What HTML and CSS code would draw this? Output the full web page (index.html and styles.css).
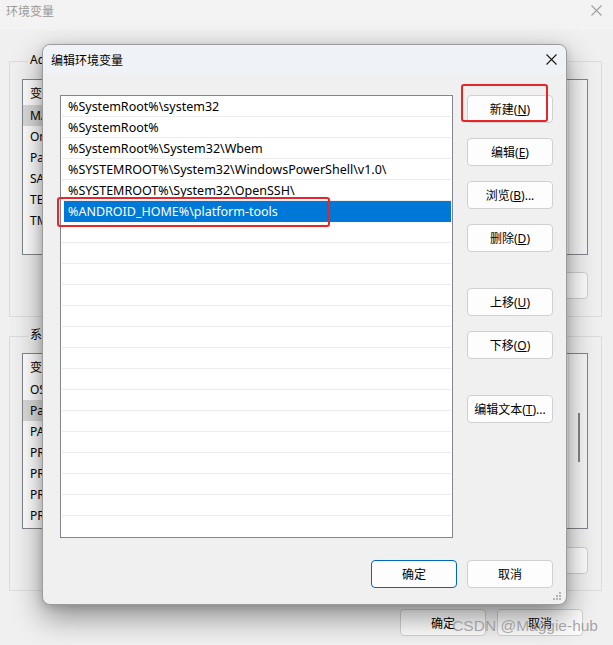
FILE: index.html
```html
<!DOCTYPE html>
<html lang="zh-CN">
<head>
  <meta charset="UTF-8" />
  <title>环境变量</title>
  <link rel="stylesheet" href="styles.css">
</head>
<body>
  <div class="window">
    <div class="win-title">
      <span>环境变量</span>
      <svg class="x-icon" width="11" height="11" viewBox="0 0 11 11"><path d="M0.5 0.5 L10.5 10.5 M10.5 0.5 L0.5 10.5" stroke="#a0a0a0" stroke-width="1.1" fill="none"/></svg>
    </div>

    <div class="group first">
      <div class="group-label">Administrator 的用户变量(U)</div>
      <div class="var-list">
        <div class="var-rows">
          <div class="var-head">变量<span>值</span></div>
          <div class="var-row"><span class="name hover">MAVEN_HOME</span></div>
          <div class="var-row"><span class="name">OneDrive</span></div>
          <div class="var-row"><span class="name">Path</span></div>
          <div class="var-row"><span class="name">SAVED_HOME</span></div>
          <div class="var-row"><span class="name">TEMP</span></div>
          <div class="var-row"><span class="name">TMP</span></div>
        </div>
        <div class="scrollbar"></div>
      </div>
      <div class="btn-row">
        <button class="btn">新建(<u>N</u>)...</button>
        <button class="btn">编辑(<u>E</u>)...</button>
        <button class="btn">删除(<u>D</u>)</button>
      </div>
    </div>

    <div class="group">
      <div class="group-label">系统变量(S)</div>
      <div class="var-list">
        <div class="var-rows">
          <div class="var-head">变量<span>值</span></div>
          <div class="var-row"><span class="name">OS</span></div>
          <div class="var-row"><span class="name hover">Path</span></div>
          <div class="var-row"><span class="name">PATHEXT</span></div>
          <div class="var-row"><span class="name">PROCESSOR_ARCHITECTURE</span></div>
          <div class="var-row"><span class="name">PROCESSOR_IDENTIFIER</span></div>
          <div class="var-row"><span class="name">PROCESSOR_LEVEL</span></div>
          <div class="var-row"><span class="name">PROCESSOR_REVISION</span></div>
        </div>
        <div class="scrollbar"><div class="thumb"></div></div>
      </div>
      <div class="btn-row">
        <button class="btn">新建(<u>W</u>)...</button>
        <button class="btn">编辑(<u>I</u>)...</button>
        <button class="btn">删除(<u>L</u>)</button>
      </div>
    </div>

    <div class="btn-row bottom">
      <button class="btn">确定</button>
      <button class="btn">取消</button>
    </div>

    <div class="dialog">
      <div class="dlg-title">
        <span>编辑环境变量</span>
        <svg class="x-icon" width="11" height="11" viewBox="0 0 11 11"><path d="M0.5 0.5 L10.5 10.5 M10.5 0.5 L0.5 10.5" stroke="#1a1a1a" stroke-width="1.1" fill="none"/></svg>
      </div>
      <div class="dlg-body">
        <div class="path-list">
          <div class="path-row">%SystemRoot%\system32</div>
          <div class="path-row">%SystemRoot%</div>
          <div class="path-row">%SystemRoot%\System32\Wbem</div>
          <div class="path-row">%SYSTEMROOT%\System32\WindowsPowerShell\v1.0\</div>
          <div class="path-row">%SYSTEMROOT%\System32\OpenSSH\</div>
          <div class="path-row selected">%ANDROID_HOME%\platform-tools</div>
          <div class="path-row"></div>
          <div class="path-row"></div>
          <div class="path-row"></div>
          <div class="path-row"></div>
          <div class="path-row"></div>
          <div class="path-row"></div>
          <div class="path-row"></div>
          <div class="path-row"></div>
          <div class="path-row"></div>
          <div class="path-row"></div>
          <div class="path-row"></div>
          <div class="path-row"></div>
          <div class="path-row"></div>
          <div class="path-row"></div>
          <div class="path-row last"></div>
        </div>
        <div class="side-btns">
          <button class="btn">新建(<u>N</u>)</button>
          <button class="btn">编辑(<u>E</u>)</button>
          <button class="btn">浏览(<u>B</u>)...</button>
          <button class="btn">删除(<u>D</u>)</button>
          <button class="btn sep">上移(<u>U</u>)</button>
          <button class="btn">下移(<u>O</u>)</button>
          <button class="btn sep">编辑文本(<u>T</u>)...</button>
        </div>
      </div>
      <div class="dlg-foot">
        <button class="btn default">确定</button>
        <button class="btn">取消</button>
      </div>

      <!-- annotations -->
      <div class="mark mark-row"></div>
      <div class="mark mark-new"></div>

      <svg class="grip" width="9" height="9" viewBox="0 0 9 9">
        <rect x="6" y="0" width="2" height="2" fill="#b4b4b4"/>
        <rect x="3" y="3" width="2" height="2" fill="#b4b4b4"/>
        <rect x="6" y="3" width="2" height="2" fill="#b4b4b4"/>
        <rect x="0" y="6" width="2" height="2" fill="#b4b4b4"/>
        <rect x="3" y="6" width="2" height="2" fill="#b4b4b4"/>
        <rect x="6" y="6" width="2" height="2" fill="#b4b4b4"/>
      </svg>
    </div>

    <div class="watermark">CSDN @Maggie-hub</div>
  </div>
</body>
</html>
```

FILE: styles.css
```css
body {
  margin: 0;
  font-family: "Noto Sans", "Noto Sans CJK SC", sans-serif;
  font-size: 12px;
  color: #000;
}
.window {
  position: relative;
  width: 613px;
  height: 645px;
  background-color: #f0f0f0;
  overflow: hidden;
}
.win-title {
  height: 30px;
  display: flex;
  justify-content: space-between;
  padding: 2px 11px 0 6px;
  box-sizing: border-box;
  color: #9a9a9a;
  background-color: #f3f3f3;
}
.win-title .x-icon {
  margin-top: 3px;
}

/* background window groups */
.group {
  margin: 19px 11px 0 9px;
  border: 1px solid #dcdcdc;
  padding: 0 13px 16px 12px;
}
.group.first {
  margin-top: 31px;
  padding-bottom: 17px;
}
.group-label {
  width: fit-content;
  margin: -10px 0 0 6px;
  padding: 0 2px;
  line-height: 16px;
  background-color: #f0f0f0;
}
.var-list {
  display: flex;
  margin-top: 11px;
  height: 176px;
  box-sizing: border-box;
  border: 1px solid #82868c;
  background-color: #fff;
}
.group:not(.first) .var-list {
  margin-top: 10px;
}
.var-rows {
  flex: 1;
}
.var-head {
  height: 25px;
  line-height: 27px;
  padding-left: 7px;
}
.var-head span {
  margin-left: 160px;
}
.var-row {
  height: 21px;
  line-height: 21px;
}
.var-row .name {
  display: block;
  width: 150px;
  padding-left: 7px;
}
.var-row .name.hover {
  background-color: #dadada;
}
.scrollbar {
  width: 18px;
  border-left: 1px solid #e6e6e6;
  background-color: #f7f7f7;
  padding-top: 59px;
}
.thumb {
  width: 2px;
  height: 49px;
  margin-left: 9px;
  background-color: #858585;
}
.btn-row {
  display: flex;
  justify-content: flex-end;
  gap: 10px;
  margin-top: 17px;
}
.group:not(.first) .btn-row {
  margin-top: 18px;
}
.btn-row .btn {
  height: 27px;
}
.btn-row.bottom {
  margin-top: 18px;
  padding-right: 30px;
  gap: 11px;
}

/* buttons */
.btn {
  width: 86px;
  height: 28px;
  padding: 0;
  border: 1px solid #d0d0d0;
  border-radius: 4px;
  background-color: #fdfdfd;
  font-family: inherit;
  font-size: 12px;
  color: #000;
}
.btn.default {
  border: 1.5px solid #0067c0;
}

/* the dialog on top */
.dialog {
  position: absolute;
  left: 42px;
  top: 44px;
  width: 525px;
  height: 561px;
  box-sizing: border-box;
  border: 1px solid #9c9c9c;
  border-radius: 8px;
  background-color: #f0f0f0;
  box-shadow: 0 12px 30px rgba(0, 0, 0, 0.42), 0 2px 8px rgba(0, 0, 0, 0.14);
}
.dlg-title {
  height: 29px;
  display: flex;
  justify-content: space-between;
  align-items: center;
  padding: 0 9px 0 8px;
  border-radius: 8px 8px 0 0;
  background-color: #eff3f8;
}
.dlg-body {
  display: flex;
  gap: 14px;
  padding: 21px 13px 0 17px;
}
.path-list {
  width: 393px;
  height: 443px;
  box-sizing: border-box;
  border: 1px solid #82868c;
  background-color: #fff;
  padding: 0 1px;
}
.path-row {
  height: 21px;
  box-sizing: border-box;
  border-bottom: 1px solid #ececec;
  padding-left: 6px;
  line-height: 21px;
  font-size: 12.5px;
  white-space: nowrap;
  overflow: hidden;
}
.path-row.last {
  border-bottom: none;
}
.path-row.selected {
  margin-left: 2px;
  padding-left: 4px;
  background-color: #0078d7;
  color: #fff;
  border-bottom-color: #0078d7;
}
.side-btns {
  display: flex;
  flex-direction: column;
  gap: 15px;
}
.side-btns .sep {
  margin-top: 21px;
}
.dlg-foot {
  display: flex;
  justify-content: flex-end;
  gap: 10px;
  margin-top: 22px;
  padding-right: 13px;
}

/* red annotation boxes */
.mark {
  position: absolute;
  border: 2px solid #e8262a;
  border-radius: 3px;
}
.mark-row {
  left: 14px;
  top: 152px;
  width: 269px;
  height: 26px;
}
.mark-new {
  left: 418px;
  top: 39px;
  width: 83px;
  height: 34px;
}
.grip {
  position: absolute;
  right: 4px;
  bottom: 3px;
}
.watermark {
  position: absolute;
  right: 15px;
  bottom: 10px;
  font-family: "Liberation Sans", sans-serif;
  font-size: 15.5px;
  line-height: 18px;
  color: rgba(140, 140, 140, 0.75);
}
```
